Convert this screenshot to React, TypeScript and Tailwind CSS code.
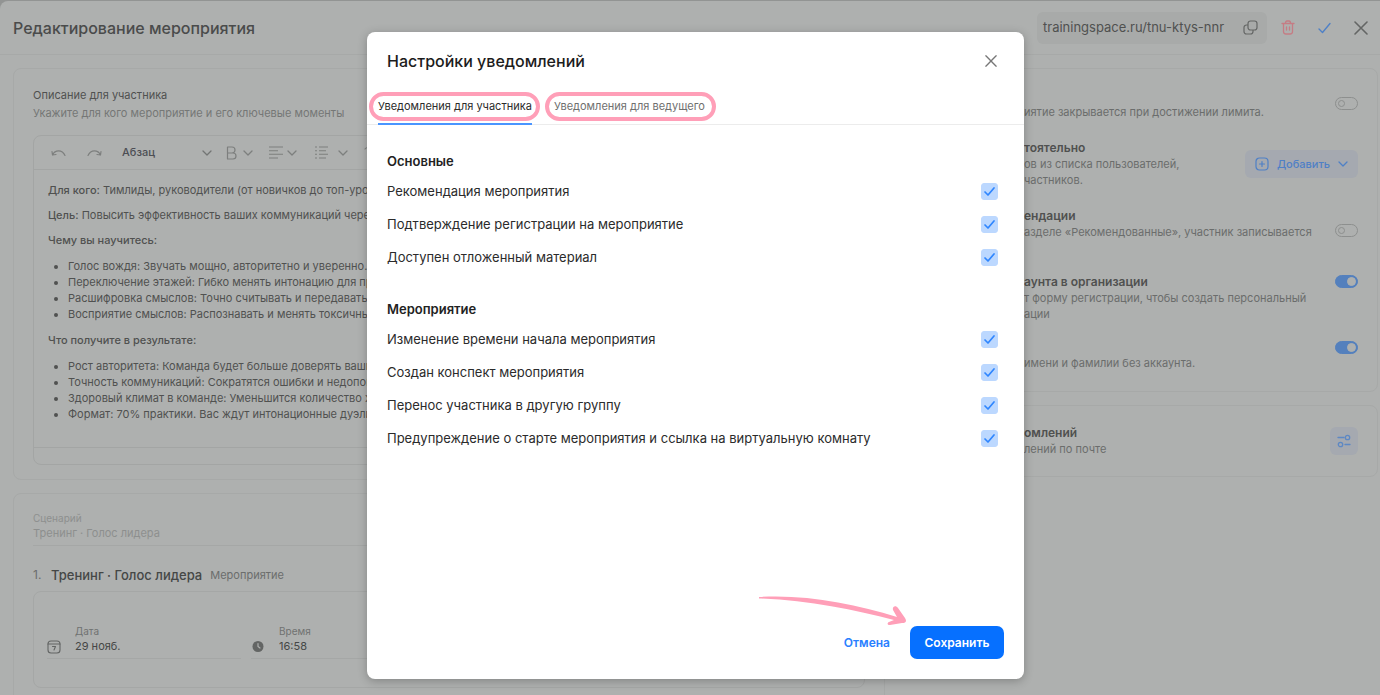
import { useState } from "react";
import type { ReactNode } from "react";

const participantGroups = [
  {
    title: "Основные",
    items: [
      "Рекомендация мероприятия",
      "Подтверждение регистрации на мероприятие",
      "Доступен отложенный материал",
    ],
  },
  {
    title: "Мероприятие",
    items: [
      "Изменение времени начала мероприятия",
      "Создан конспект мероприятия",
      "Перенос участника в другую группу",
      "Предупреждение о старте мероприятия и ссылка на виртуальную комнату",
    ],
  },
];

const learnItems = [
  "Голос вождя: Звучать мощно, авторитетно и уверенно.",
  "Переключение этажей: Гибко менять интонацию для прямых",
  "Расшифровка смыслов: Точно считывать и передавать",
  "Восприятие смыслов: Распознавать и менять токсичные",
];

const resultItems = [
  "Рост авторитета: Команда будет больше доверять вашим",
  "Точность коммуникаций: Сократятся ошибки и недопонимания",
  "Здоровый климат в команде: Уменьшится количество жалоб",
  "Формат: 70% практики. Вас ждут интонационные дуэли",
];

function Chevron() {
  return (
    <svg width="10" height="10" viewBox="0 0 10 10" fill="none" stroke="currentColor" strokeWidth="1.3" strokeLinecap="round" strokeLinejoin="round">
      <path d="M1 3l4 4 4-4" />
    </svg>
  );
}

function Cross({ size }: { size: number }) {
  return (
    <svg width={size} height={size} viewBox="0 0 14 14" fill="none" stroke="currentColor" strokeWidth="1.6" strokeLinecap="round">
      <path d="M1 1l12 12M13 1L1 13" />
    </svg>
  );
}

function Toggle({ on, label }: { on?: boolean; label: string }) {
  return (
    <span className="relative flex h-[13px] w-[23px] shrink-0">
      <input
        type="checkbox"
        role="switch"
        aria-label={label}
        defaultChecked={on}
        className="peer h-[13px] w-[23px] appearance-none rounded-full border border-[#8d8f8e] checked:border-[#5480bd] checked:bg-[#5480bd]"
      />
      <span className="pointer-events-none absolute left-[3px] top-[3px] size-[7px] rounded-full border border-[#8d8f8e] peer-checked:left-[12px] peer-checked:top-[2px] peer-checked:size-[9px] peer-checked:border-[#aeb0af] peer-checked:bg-[#aeb0af]" />
    </span>
  );
}

function Setting({ title, lines, control }: { title?: string; lines: string[]; control: ReactNode }) {
  return (
    <div className="flex justify-between gap-2">
      <div className="whitespace-nowrap">
        {title && <h3 className="text-xs leading-4 font-semibold text-[#505150]">{title}</h3>}
        {lines.map((line) => (
          <p key={line} className="text-[11px] leading-4 text-[#6b6d6c]">{line}</p>
        ))}
      </div>
      {control}
    </div>
  );
}

function Header() {
  return (
    <header className="flex h-[54px] items-center justify-between border-b border-[#a7a9a8] pr-3 pl-[13px]">
      <h1 className="text-base leading-5 font-medium text-[#4a4b4b]">Редактирование мероприятия</h1>
      <div className="flex items-center">
        <div className="flex h-8 w-[230px] items-center justify-between rounded-md bg-[#a8aaa9] pr-[9px] pl-[6px]">
          <span className="text-[13px] text-[#505150]">trainingspace.ru/tnu-ktys-nnr</span>
          <button type="button" aria-label="Копировать ссылку" className="text-[#646665]">
            <svg width="15" height="15" viewBox="0 0 15 15" fill="none" stroke="currentColor" strokeWidth="1.2">
              <rect x="5" y="1" width="9" height="9" rx="2.5" />
              <path d="M5 5H3.5A2.5 2.5 0 0 0 1 7.5v4A2.5 2.5 0 0 0 3.5 14h4a2.5 2.5 0 0 0 2.5-2.5V10" />
            </svg>
          </button>
        </div>
        <div className="flex items-center gap-[23px] pl-[14px]">
          <button type="button" aria-label="Удалить" className="text-[#c57c84]">
            <svg width="14" height="15" viewBox="0 0 14 15" fill="none" stroke="currentColor" strokeWidth="1.3" strokeLinecap="round" strokeLinejoin="round">
              <path d="M1 3.5h12M4.500 3.500c0-1.500.5-2.500 1.500-2.500h2c1 0 1.500 1 1.500 2.500M2.500 3.500v8c0 1.500.8 2.500 2.500 2.500h4c1.700 0 2.500-1 2.500-2.500v-8M5.500 7v3M8.500 7v3" />
            </svg>
          </button>
          <button type="button" aria-label="Готово" className="text-[#4f80c6]">
            <svg width="13" height="12" viewBox="0 0 13 12" fill="none" stroke="currentColor" strokeWidth="1.4" strokeLinecap="round" strokeLinejoin="round">
              <path d="M1 7l3.500 3.500L12 1.500" />
            </svg>
          </button>
          <button type="button" aria-label="Закрыть" className="text-[#646665]">
            <Cross size={14} />
          </button>
        </div>
      </div>
    </header>
  );
}

function Toolbar() {
  return (
    <div className="flex h-[34px] items-center border-b border-[#a3a5a4] pl-[17px] text-[#7d7f7e]">
      <button type="button" aria-label="Отменить">
        <svg width="15" height="8" viewBox="0 0 15 8" fill="none" stroke="currentColor" strokeWidth="1.2" strokeLinecap="round" strokeLinejoin="round">
          <path d="M1 2.500L1.500 6 5 5.500M1.500 6C4 .8 11 .2 14 6.500" />
        </svg>
      </button>
      <button type="button" aria-label="Повторить" className="ml-[21px]">
        <svg width="15" height="8" viewBox="0 0 15 8" fill="none" stroke="currentColor" strokeWidth="1.2" strokeLinecap="round" strokeLinejoin="round">
          <path d="M14 2.500L13.500 6 10 5.500M13.500 6C11 .8 4 .2 1 6.500" />
        </svg>
      </button>
      <button type="button" className="ml-5 flex w-[90px] items-center justify-between text-[11px] font-medium text-[#4c4e54]">
        Абзац
        <span className="text-[#737574]"><Chevron /></span>
      </button>
      <button type="button" aria-label="Начертание" className="ml-[14px] flex items-center gap-[5px]">
        <svg width="12" height="14" viewBox="0 0 12 14" fill="none" stroke="currentColor" strokeWidth="1.2" strokeLinejoin="round">
          <path d="M1.500 1h4.500a3 3 0 0 1 0 6H1.500zM1.500 7h5.500a3 3 0 0 1 0 6H1.500z" />
        </svg>
        <Chevron />
      </button>
      <button type="button" aria-label="Выравнивание" className="ml-4 flex items-center gap-[3px]">
        <svg width="15" height="13" viewBox="0 0 15 13" fill="none" stroke="currentColor" strokeWidth="1.1">
          <path d="M0 1h14M0 4.700h9M0 8.300h14M0 12h9" />
        </svg>
        <Chevron />
      </button>
      <button type="button" aria-label="Список" className="ml-[18px] flex items-center gap-[10px]">
        <svg width="13" height="13" viewBox="0 0 13 13" fill="none" stroke="currentColor" strokeWidth="1.1">
          <path d="M0 1h2M4 1h9M0 4.700h2M4 4.700h7M0 8.300h2M4 8.300h9M0 12h2M4 12h7" />
        </svg>
        <Chevron />
      </button>
      <button type="button" aria-label="Ссылка" className="ml-4">
        <svg width="14" height="14" viewBox="0 0 14 14" fill="none" stroke="currentColor" strokeWidth="1.1" strokeLinecap="round">
          <path d="M1 3c1-1.500 2-1.500 3-1M9 13c2 0 4-2 4-4" />
        </svg>
      </button>
    </div>
  );
}

function Description() {
  return (
    <section className="rounded-lg border border-[#a7a9a8] px-[19px] pt-[17px] pb-[14px]">
      <h2 className="text-[11px] leading-[18px] text-[#505150]">Описание для участника</h2>
      <p className="text-[11px] leading-[18px] text-[#757776]">Укажите для кого мероприятие и его ключевые моменты</p>
      <div className="mt-[13px] overflow-hidden rounded-lg border border-[#a3a5a4]">
        <Toolbar />
        <div className="flex flex-col px-[14px] pt-3 pb-[15px] text-[11px] leading-4 whitespace-nowrap text-[#505150]">
          <p><b className="font-medium">Для кого:</b> Тимлиды, руководители (от новичков до топ-уровня)</p>
          <p className="mt-[9px]"><b className="font-medium">Цель:</b> Повысить эффективность ваших коммуникаций через голос</p>
          <p className="mt-[9px] font-medium">Чему вы научитесь:</p>
          <ul className="my-[10px] list-disc pl-5">
            {learnItems.map((item) => <li key={item}>{item}</li>)}
          </ul>
          <p className="font-medium">Что получите в результате:</p>
          <ul className="my-[10px] list-disc pl-5">
            {resultItems.map((item) => <li key={item}>{item}</li>)}
          </ul>
        </div>
        <div className="h-[17px] border-t border-[#a3a5a4]" />
      </div>
    </section>
  );
}

function Field({ icon, label, value }: { icon: ReactNode; label: string; value: string }) {
  return (
    <div className="flex h-[35px] w-[194px] items-start border-b border-[#a5a7a6]">
      <span className="flex w-7 shrink-0 pt-[16px] text-[#636564]">{icon}</span>
      <label className="flex min-w-0 flex-col text-[10px] leading-[14px] text-[#707271]">
        {label}
        <input type="text" defaultValue={value} className="h-4 w-full text-[11px] leading-4 text-[#454746] outline-none" />
      </label>
    </div>
  );
}

function Scenario() {
  return (
    <section className="rounded-lg border border-[#a7a9a8] px-[19px] pt-[17px] pb-10">
      <div className="h-[35px] border-b border-[#a5a7a6] text-[#8d8f8e]">
        <p className="text-[10px] leading-[14px]">Сценарий</p>
        <p className="text-[11px] leading-4">Тренинг · Голос лидера</p>
      </div>
      <div className="mt-[19px] flex items-center text-[#6b6d6c]">
        <span className="w-[18px] text-xs">1.</span>
        <h2 className="text-[13px] leading-5 font-medium text-[#454746]">Тренинг · Голос лидера</h2>
        <span className="ml-2 text-[11px]">Мероприятие</span>
      </div>
      <div className="mt-[6px] flex gap-[10px] rounded-lg border border-[#a5a7a6] px-[13px] pt-8 pb-7">
        <Field
          label="Дата"
          value="29 нояб."
          icon={
            <svg width="15" height="14" viewBox="0 0 15 14" fill="none" stroke="currentColor" strokeWidth="1.1" strokeLinecap="round" strokeLinejoin="round">
              <rect x="1" y="1" width="12" height="12" rx="3" />
              <path d="M1 4h12M5.500 6.500h3L7 10" />
            </svg>
          }
        />
        <Field
          label="Время"
          value="16:58"
          icon={
            <svg width="15" height="13" viewBox="0 0 15 13">
              <circle cx="7" cy="6.500" r="5.500" fill="currentColor" />
              <path d="M7 3.500v3l2 1.500" fill="none" stroke="#aeb0af" strokeWidth="1.2" strokeLinecap="round" />
            </svg>
          }
        />
      </div>
    </section>
  );
}

function Settings() {
  return (
    <aside className="flex flex-col gap-[13px]">
      <section className="flex flex-col rounded-lg border border-[#a7a9a8] pt-7 pr-[19px] pb-5 pl-[125px]">
        <div className="flex items-start justify-between">
          <p className="pt-[7px] text-[11px] leading-4 whitespace-nowrap text-[#6b6d6c]">иятие закрывается при достижении лимита.</p>
          <Toggle label="Лимит участников" />
        </div>
        <div className="pt-5">
          <Setting
            title="тоятельно"
            lines={["ов из списка пользователей,", "частников."]}
            control={
              <button type="button" className="mt-[10px] flex h-7 w-[113px] shrink-0 items-center justify-between self-start rounded-md bg-[#a5a9b0] px-[10px] text-[11px] font-medium text-[#4f80c6]">
                <svg width="14" height="14" viewBox="0 0 14 14" fill="none" stroke="currentColor" strokeWidth="1.2" strokeLinecap="round">
                  <rect x="1" y="1" width="12" height="12" rx="3.5" />
                  <path d="M7 4.500v5M4.500 7h5" />
                </svg>
                Добавить
                <Chevron />
              </button>
            }
          />
        </div>
        <div className="pt-5">
          <Setting
            title="ендации"
            lines={["азделе «Рекомендованные», участник записывается"]}
            control={<span className="pt-4"><Toggle label="Рекомендации" /></span>}
          />
        </div>
        <div className="pt-[34px]">
          <Setting
            title="аунта в организации"
            lines={["т форму регистрации, чтобы создать персональный", "ации"]}
            control={<span className="pt-px"><Toggle on label="Создание аккаунта в организации" /></span>}
          />
        </div>
        <div className="flex items-start justify-between pt-[19px]">
          <p className="pt-[14px] text-[11px] leading-4 whitespace-nowrap text-[#6b6d6c]">имени и фамилии без аккаунта.</p>
          <Toggle on label="Вход без аккаунта" />
        </div>
      </section>
      <section className="rounded-lg border border-[#a7a9a8] pt-[19px] pr-[19px] pb-[19px] pl-[125px]">
        <Setting
          title="омлений"
          lines={["лений по почте"]}
          control={
            <button type="button" aria-label="Настройки уведомлений" className="mt-[2px] flex size-7 shrink-0 items-center justify-center rounded-md bg-[#a5a9b0] text-[#5d88c4]">
              <svg width="14" height="14" viewBox="0 0 14 14" fill="none" stroke="currentColor" strokeWidth="1.3" strokeLinecap="round">
                <path d="M1 3.500h6M8 10.500h5" />
                <circle cx="10.5" cy="3.5" r="2.2" />
                <circle cx="3.5" cy="10.5" r="2.2" />
              </svg>
            </button>
          }
        />
      </section>
    </aside>
  );
}

function NotificationCheck({ label }: { label: string }) {
  return (
    <label className="flex h-[33px] items-center justify-between text-[13px] text-[#2b2b2b]">
      {label}
      <span className="relative flex size-[17px]">
        <input type="checkbox" defaultChecked className="peer size-[17px] appearance-none rounded-[3px] border border-[#bcd8ff] checked:bg-[#bcd8ff]" />
        <svg className="pointer-events-none absolute inset-0 hidden peer-checked:block" width="17" height="17" viewBox="0 0 17 17" fill="none" stroke="#2f86ff" strokeWidth="1.7" strokeLinecap="round" strokeLinejoin="round">
          <path d="M4 9l3 3 6-7" />
        </svg>
      </span>
    </label>
  );
}

function NotificationsDialog() {
  const [tab, setTab] = useState(0);
  const tabs = ["Уведомления для участника", "Уведомления для ведущего"];

  return (
    <div role="dialog" aria-modal="true" aria-labelledby="dialog-title" className="relative flex min-h-[647px] w-[657px] flex-col rounded-lg bg-white shadow-[0_2px_10px_rgba(0,0,0,0.25)]">
      <div className="flex items-center justify-between pt-[18px] pr-[27px] pl-5">
        <h2 id="dialog-title" className="text-base leading-[22px] font-medium text-[#1c1c1c]">Настройки уведомлений</h2>
        <button type="button" aria-label="Закрыть" className="text-[#777]">
          <Cross size={12} />
        </button>
      </div>

      <div role="tablist" className="mt-5 flex h-[33px] gap-[5px] border-b border-[#ececec] pl-[2px]">
        {tabs.map((name, i) => (
          <div key={name} className="relative flex h-[33px] w-[171px] pl-[9px]">
            <button
              type="button"
              role="tab"
              aria-selected={tab === i}
              onClick={() => setTab(i)}
              className={`flex h-[33px] items-start border-b-2 pt-[6px] text-[11px] leading-4 whitespace-nowrap ${tab === i ? "border-[#4a95ff] text-[#2b2b2b]" : "border-transparent text-[#6f6f6f]"}`}
            >
              {name}
            </button>
            <span className="pointer-events-none absolute inset-x-0 top-0 h-[29px] rounded-full border-4 border-[#ff9fb8]" />
          </div>
        ))}
      </div>

      <div className="flex flex-col gap-[25px] pt-[26px] pr-[26px] pl-5">
        {participantGroups.map((group) => (
          <fieldset key={group.title}>
            <legend className="pb-1 text-[13px] leading-5 font-semibold text-[#222]">{group.title}</legend>
            {group.items.map((item) => <NotificationCheck key={item} label={item} />)}
          </fieldset>
        ))}
      </div>

      <div className="relative mt-auto flex items-center justify-end gap-5 pr-5 pb-5">
        <svg className="pointer-events-none absolute right-[117px] bottom-[52px]" width="150" height="34" viewBox="0 0 150 34" fill="#ff9fb8">
          <path d="M2 4C48 1 98 11 140 24L136 17C135 13 139 12 141 15L148 25C150 28 149 30 145 30L133 32C130 32 130 30 132 29L137 27C98 17 50 7 2 5.500Z" />
        </svg>
        <button type="button" className="text-xs font-semibold text-[#2a80ff]">Отмена</button>
        <button type="button" className="h-[33px] w-[94px] rounded-[7px] bg-[#0670ff] text-xs font-semibold text-white">Сохранить</button>
      </div>
    </div>
  );
}

export default function App() {
  return (
    <div className="relative h-screen overflow-hidden bg-[#929493] pt-px font-[Inter,'Noto_Sans',sans-serif]">
      <main className="min-h-full rounded-tl-lg bg-[#aeb0af]">
        <Header />
        <div className="grid grid-cols-[minmax(0,872fr)_minmax(0,480fr)] gap-[13px] pt-[13px] pr-[2px] pl-[13px]">
          <div className="flex flex-col gap-[13px]">
            <Description />
            <Scenario />
          </div>
          <Settings />
        </div>
      </main>

      {/* Dialog layer */}
      <div className="absolute inset-0 flex items-start justify-center pt-8 pl-[11px]">
        <NotificationsDialog />
      </div>
    </div>
  );
}
